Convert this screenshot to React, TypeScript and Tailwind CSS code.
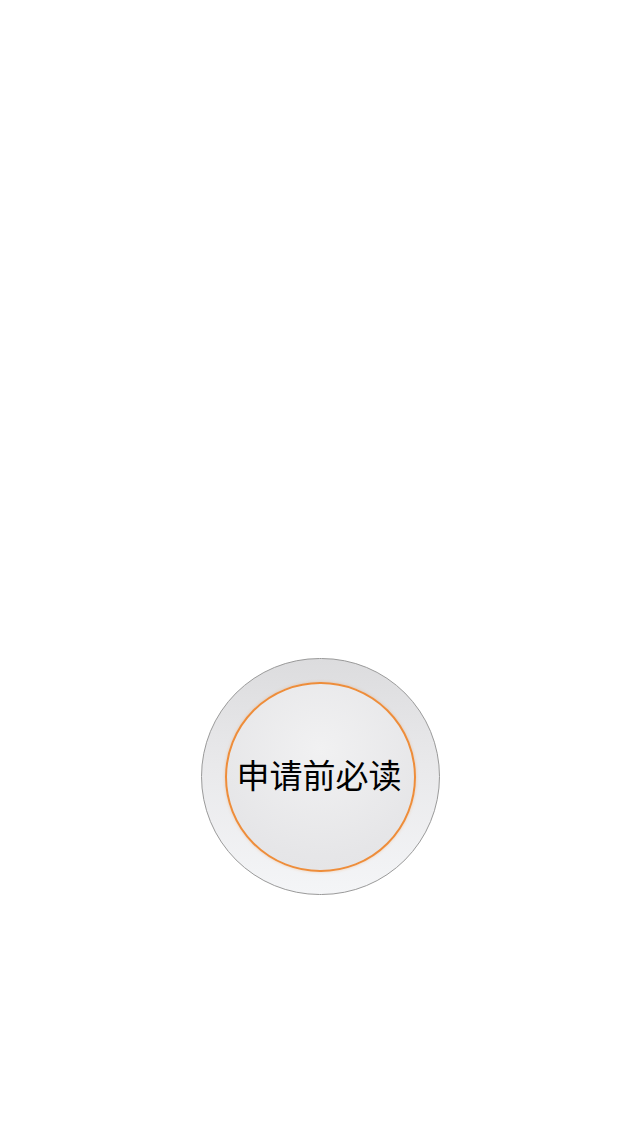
import React from 'react';

const App: React.FC = () => {
  return (
    <div className="min-h-[1136px] w-full bg-white">
      <div className="flex justify-center pt-[658px]">
        <button
          className="flex h-[237px] w-[239px] items-center justify-center rounded-full border border-[#9a9a9a] bg-[linear-gradient(180deg,#dcdcde_0%,#e9e9eb_45%,#f4f5f7_100%)]"
        >
          <div className="flex h-[190px] w-[191px] items-center justify-center rounded-full border-2 border-[#ee8d3a] bg-[radial-gradient(circle_at_50%_35%,#f1f1f2_0%,#e6e6e8_70%,#e3e3e5_100%)] shadow-[0_0_3px_rgba(238,141,58,0.35)]">
            <span className="text-[33px] leading-none text-black [font-family:'Noto_Sans_CJK_SC',sans-serif] -translate-x-[1px] -translate-y-[2px]">
              申请前必读
            </span>
          </div>
        </button>
      </div>
    </div>
  );
};

export default App;
